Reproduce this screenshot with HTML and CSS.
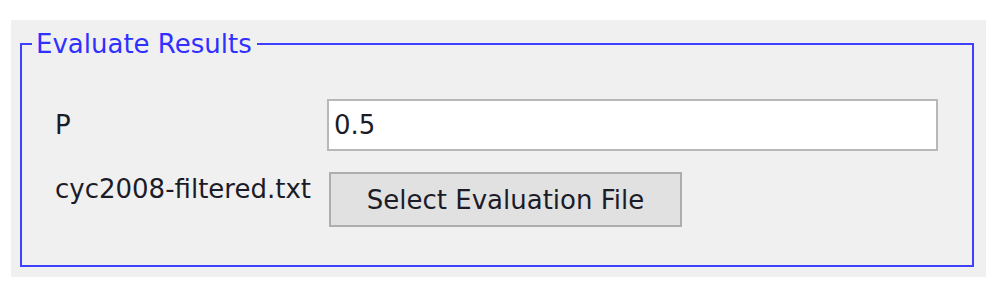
FILE: index.html
```html
<!DOCTYPE html>
<html lang="en">
<head>
    <meta charset="UTF-8">
    <title>Evaluate Results</title>
    <link rel="stylesheet" href="styles.css">
</head>
<body>
    <div class="panel">
        <fieldset class="group">
            <legend>Evaluate Results</legend>
            <div class="form-grid">
                <label class="field-label" for="pValue">P</label>
                <input type="text" id="pValue" class="text-field" value="0.5">

                <span class="field-label file-name">cyc2008-filtered.txt</span>
                <button type="button" class="select-button">Select Evaluation File</button>
            </div>
        </fieldset>
    </div>
</body>
</html>
```

FILE: styles.css
```css
/* Base */
* {
    box-sizing: border-box;
}

body {
    margin: 0;
    background: #ffffff;
    font-family: "DejaVu Sans", sans-serif;
    font-size: 26px;
    color: #1c1c28;
}

/* Gray window area */
.panel {
    margin: 20px 14px 15px 11px;
    padding: 9px 12px 10px 9px;
    background: #f0f0f0;
    height: 257px;
}

/* Titled group border */
.group {
    margin: 0;
    height: 238px;
    padding: 0 33px 0 33px;
    border: 2px solid #4040ff;
}

.group legend {
    margin-left: -23px;
    padding: 0 5px 0 4px;
    line-height: 30px;
    color: #3030ff;
}

.form-grid {
    display: grid;
    grid-template-columns: 272px 611px;
    row-gap: 21px;
    padding-top: 40px;
}

.field-label {
    line-height: 30px;
    align-self: center;
}

.file-name {
    align-self: start;
    padding-top: 2px;
}

.text-field {
    height: 52px;
    width: 611px;
    padding: 0 5px;
    border: 2px solid #b8b8b8;
    background: #ffffff;
    font: inherit;
    color: #1c1c28;
    outline: none;
}

.select-button {
    height: 55px;
    width: 353px;
    margin-left: 2px;
    border: 2px solid #adadad;
    background: #e1e1e1;
    font: inherit;
    color: #1c1c28;
    padding: 0;
}
```
